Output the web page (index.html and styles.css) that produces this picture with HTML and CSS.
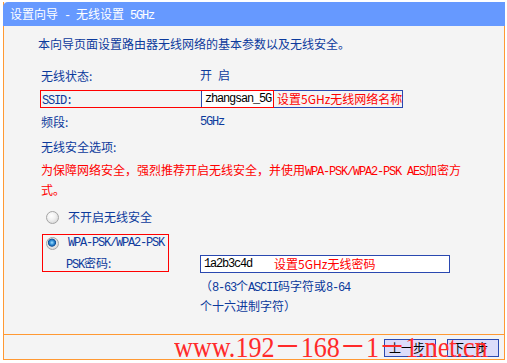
FILE: index.html
```html
<!doctype html>
<html lang="zh-CN">
<head>
    <meta charset="UTF-8">
    <title>设置向导 - 无线设置 5GHz</title>
    <link rel="stylesheet" href="styles.css">
</head>
<body>
    <div class="panel">
        <div class="head">设置向导<span class="en"> - </span>无线设置<span class="en"> 5GHz</span></div>

        <div class="main">
            <p class="intro">本向导页面设置路由器无线网络的基本参数以及无线安全。</p>

            <div class="row">
                <span class="lbl">无线状态:</span>
                <span>开<span class="en"> </span>启</span>
            </div>

            <div class="ssid-line">
                <div class="redbox">
                    <span class="lbl ssid-lbl"><span class="en">SSID:</span></span>
                    <span class="field en">zhangsan_5G</span>
                </div>
                <div class="note-box">设置5GHz无线网络名称</div>
            </div>

            <div class="row freq">
                <span class="lbl">频段:</span>
                <span class="en">5GHz</span>
            </div>

            <div class="row opt-title">无线安全选项:</div>

            <p class="warn">为保障网络安全，强烈推荐开启无线安全，并使用<span class="en">WPA-PSK/WPA2-PSK AES</span>加密方式。</p>

            <div class="row radio-row">
                <span class="radio"></span>
                <span class="radio-lbl">不开启无线安全</span>
            </div>

            <div class="sec">
                <div class="redbox2">
                    <div class="radio-row2">
                        <span class="radio on"></span>
                        <span class="radio-lbl en">WPA-PSK/WPA2-PSK</span>
                    </div>
                    <div class="psk-lbl"><span class="en">PSK</span>密码:</div>
                </div>
                <div class="psk-col">
                    <div class="psk-input">
                        <span class="en">1a2b3c4d</span>
                        <span class="psk-note">设置5GHz无线密码</span>
                    </div>
                    <p class="hint">（<span class="en">8-63</span>个<span class="en">ASCII</span>码字符或<span class="en">8-64</span><br>个十六进制字符）</p>
                </div>
            </div>
        </div>

        <div class="foot">
            <button class="btn">上一步</button>
            <button class="btn">下一步</button>
            <div class="mark">www.192－168－1－1.net.cn</div>
        </div>
    </div>
</body>
</html>
```

FILE: styles.css
```css
*{margin:0;padding:0;}
body{
    background:#fff;
    font:12px "Noto Sans CJK SC", sans-serif;
    color:#0c3a9c;
}
/* 西文部分用等宽字体，每字6px */
.en{
    font-family:"Liberation Mono", "Noto Sans CJK SC", monospace;
    letter-spacing:-1.2px;
}
.panel{
    margin:2px 0 0 3px;
    width:502px;
    height:358px;
    box-sizing:border-box;
    display:flex;
    flex-direction:column;
    border:1px solid #ff9933;
    border-top:0;
    background:#f4f4f4;
}
.head{
    height:24px;
    line-height:24px;
    margin:0 -1px;
    padding-left:7px;
    background:#6699ff;
    color:#fff;
    border-radius:5px 0 0 0;
}
.main{
    flex:1;
    padding:9px 0 0 37px;
}
.intro{
    margin:0 0 14px -3px;
    line-height:18px;
}
.row{
    display:flex;
    align-items:center;
    height:18px;
    line-height:18px;
}
.lbl{
    width:159px;
    flex:none;
}
.ssid-line{
    display:flex;
    height:18px;
    margin:5px 0 0 -1px;
}
.redbox{
    display:flex;
    width:234px;
    box-sizing:border-box;
    border:1px solid #ff0000;
    line-height:16px;
}
.ssid-lbl{
    padding-left:1px;
}
.field{
    flex:1;
    padding-left:3px;
    background:#fff;
    border-left:1px solid #2a48b0;
    color:#000;
}
.note-box{
    width:129px;
    height:18px;
    box-sizing:border-box;
    padding-left:3px;
    border:1px solid #2a48b0;
    border-left:0;
    line-height:16px;
    color:#ff0000;
    white-space:nowrap;
    overflow:hidden;
}
.freq{margin-top:5px;}
.opt-title{margin-top:7px;}
.warn{
    margin-top:5px;
    width:425px;
    line-height:18px;
    color:#ff0000;
}
.radio-row{margin-top:9px;}
.radio{
    flex:none;
    width:13px;
    height:13px;
    margin-left:5px;
    box-sizing:border-box;
    border:1px solid #a4a4a4;
    border-radius:50%;
    background:radial-gradient(circle at 40% 35%, #fff 0, #f2f2f2 40%, #cdcdcd 100%);
}
.radio.on{
    background:radial-gradient(circle at 45% 42%, #a8e2ff 0, #3a97dc 22%, #0c4f98 42%, #e6e6e6 50%, #cfcfcf 100%);
}
.radio-lbl{margin-left:9px;}
.sec{
    display:flex;
    margin-top:8px;
}
.redbox2{
    width:127px;
    height:38px;
    margin-left:1px;
    box-sizing:border-box;
    padding-left:2px;
    border:1px solid #ff0000;
}
.redbox2 .radio{margin-left:1px;}
.radio-row2{
    display:flex;
    align-items:center;
    height:16px;
    line-height:16px;
}
.psk-lbl{
    margin:4px 0 0 21px;
    line-height:16px;
}
.psk-col{margin-left:31px;}
.psk-input{
    display:flex;
    width:250px;
    height:18px;
    margin-top:21px;
    box-sizing:border-box;
    padding-left:3px;
    border:1px solid #2a48b0;
    background:#fff;
    line-height:16px;
    color:#000;
}
.psk-note{
    margin-left:22px;
    color:#ff0000;
}
.hint{
    margin-top:4px;
    line-height:18px;
}
.foot{
    position:relative;
    height:25px;
    box-sizing:border-box;
    display:flex;
    justify-content:flex-end;
    align-items:flex-start;
    gap:11px;
    padding:4px 5px 0 0;
    border-top:1px solid #ff9933;
    overflow:hidden;
}
.btn{
    width:52px;
    height:18px;
    box-sizing:border-box;
    padding-left:4px;
    border:1px solid #2a48b0;
    background:#dcdcfa;
    color:#000;
    font:12px/16px "Noto Sans CJK SC", sans-serif;
    text-align:left;
}
/* 水印 */
.mark{
    position:absolute;
    left:170px;
    top:-2px;
    font:29px/29px "Liberation Serif", "Noto Sans CJK SC", serif;
    color:#ff2a2a;
    white-space:nowrap;
    transform:scaleX(0.9);
    transform-origin:left top;
    pointer-events:none;
}
```
